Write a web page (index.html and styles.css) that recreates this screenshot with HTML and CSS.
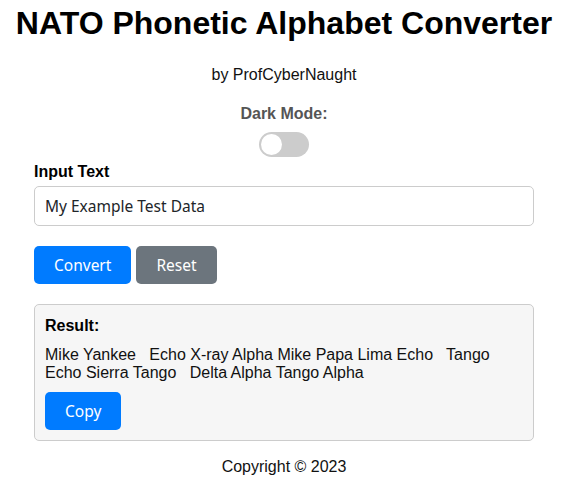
FILE: index.html
```html
<!DOCTYPE html>
<html>
<head>
<meta charset="utf-8">
<link rel="stylesheet" href="styles.css">
</head>
<body>
<div class="page">
  <h1 class="title">NATO Phonetic Alphabet Converter</h1>
  <p class="byline">by ProfCyberNaught</p>
  <div class="mode">
    <div class="mode-label">Dark Mode:</div>
    <div class="toggle"><span class="knob"></span></div>
  </div>
  <div class="container">
    <label class="field-label">Input Text</label>
    <input class="text-input" type="text" value="My Example Test Data">
    <div class="actions">
      <button class="btn btn-primary">Convert</button>
      <button class="btn btn-secondary">Reset</button>
    </div>
    <div class="result">
      <div class="result-title">Result:</div>
      <div class="result-text">Mike Yankee &nbsp; Echo X-ray Alpha Mike Papa Lima Echo &nbsp; Tango Echo Sierra Tango &nbsp; Delta Alpha Tango Alpha</div>
      <button class="btn btn-primary">Copy</button>
    </div>
  </div>
  <footer class="footer">Copyright © 2023</footer>
</div>
</body>
</html>
```
FILE: styles.css
```css
html, body {
  margin: 0;
  padding: 0;
  background: #ffffff;
}
body {
  font-family: "Liberation Sans", Arial, sans-serif;
  color: #111;
  font-size: 16px;
}
.page {
  display: flex;
  flex-direction: column;
  align-items: center;
  padding: 5px 7px 0 0;
}
.title {
  font-size: 32px;
  line-height: 37px;
  margin: 0;
  font-weight: bold;
  color: #000;
}
.byline {
  margin: 24px 0 0;
  line-height: 18px;
}
.mode {
  margin-top: 21px;
  display: flex;
  flex-direction: column;
  align-items: center;
}
.mode-label {
  font-weight: bold;
  color: #555;
  line-height: 18px;
}
.toggle {
  margin-top: 9px;
  width: 50px;
  height: 25px;
  border-radius: 13px;
  background: #ccc;
  position: relative;
}
.knob {
  position: absolute;
  left: 2px;
  top: 2px;
  width: 21px;
  height: 21px;
  border-radius: 50%;
  background: #fff;
}
.container {
  width: 500px;
  margin-top: 6px;
  display: flex;
  flex-direction: column;
  align-items: flex-start;
}
.field-label {
  font-weight: bold;
  color: #000;
  line-height: 18px;
}
.text-input {
  margin-top: 5px;
  box-sizing: border-box;
  width: 100%;
  height: 40px;
  border: 1px solid #ccc;
  border-radius: 5px;
  padding: 0 10px;
  font-family: "Noto Sans", sans-serif;
  font-size: 15.5px;
  color: #212529;
  outline: none;
}
.actions {
  margin-top: 20px;
  display: flex;
  gap: 5px;
}
.btn {
  border: none;
  border-radius: 5px;
  padding: 7px 20px;
  font-family: "Noto Sans", sans-serif;
  font-size: 15.5px;
  line-height: 24px;
  color: #fff;
  cursor: pointer;
}
.btn-primary {
  background: #007bff;
}
.btn-secondary {
  background: #6c757d;
}
.result {
  margin-top: 20px;
  box-sizing: border-box;
  width: 100%;
  background: #f6f6f6;
  border: 1px solid #ccc;
  border-radius: 5px;
  padding: 10px;
  display: flex;
  flex-direction: column;
  align-items: flex-start;
}
.result-title {
  font-weight: bold;
  color: #000;
  line-height: 18px;
  margin-top: 2px;
}
.result-text {
  margin-top: 11px;
  line-height: 18px;
  color: #111;
}
.result .btn {
  margin-top: 10px;
}
.footer {
  margin-top: 17px;
  line-height: 18px;
  color: #111;
}
```
